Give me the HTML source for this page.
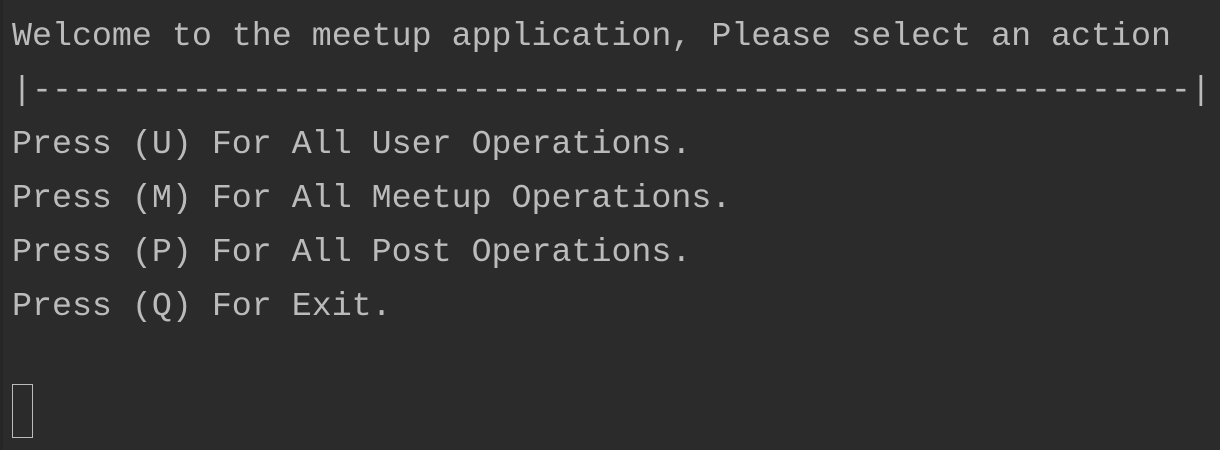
<html><head><style>
body{margin:0;width:1220px;height:450px;background:#2b2b2b;overflow:hidden;position:relative}
.l{position:absolute;left:0;top:0;width:3px;height:450px;background:#262626}
pre{margin:0;position:absolute;left:12px;top:9px;font-family:"Liberation Mono",monospace;font-size:33.3px;line-height:54px;color:#bbbbbb}
.c{position:absolute;left:12px;top:384px;width:19px;height:52px;border:1.5px solid #bbbbbb}
</style></head><body><div class="l"></div>
<pre>Welcome to the meetup application, Please select an action
|----------------------------------------------------------|
Press (U) For All User Operations.
Press (M) For All Meetup Operations.
Press (P) For All Post Operations.
Press (Q) For Exit.</pre>
<div class="c"></div>
</body></html>
